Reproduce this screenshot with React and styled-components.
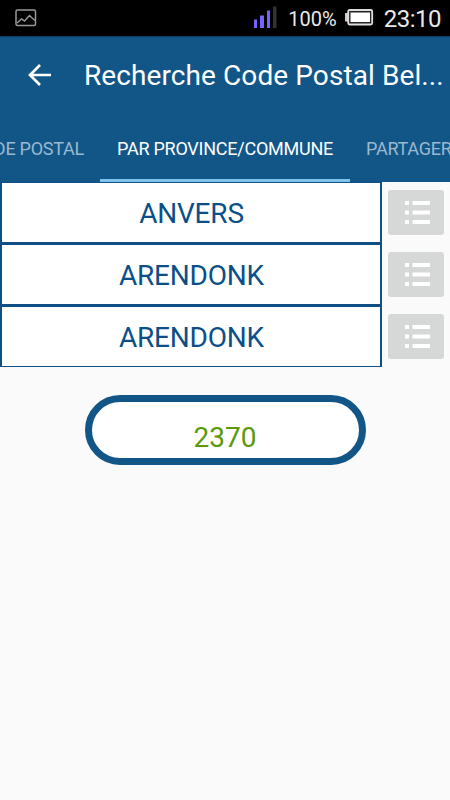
import React from 'react'
import styled, { createGlobalStyle } from 'styled-components';

const rows = ['ANVERS', 'ARENDONK', 'ARENDONK'];

export default function App() {
  return (
    <Screen>
      <GlobalStyle />
      <StatusBar>
        <PictureIcon />
        <StatusRight>
          <SignalIcon />
          <Percent>100%</Percent>
          <BatteryIcon />
          <Clock>23:10</Clock>
        </StatusRight>
      </StatusBar>
      <AppBar>
        <BackButton aria-label="Retour">
          <svg width="24" height="24" viewBox="0 0 24 24" fill="none" stroke="#fff" strokeWidth="2.7">
            <path d="M24 12H4M13 2L3 12l10 10" />
          </svg>
        </BackButton>
        <Title>Recherche Code Postal Bel...</Title>
      </AppBar>
      <Tabs>
        <Tab $align="flex-end">CODE POSTAL</Tab>
        <Tab $active>PAR PROVINCE/COMMUNE</Tab>
        <Tab $align="flex-start">PARTAGER</Tab>
      </Tabs>
      <main>
        {rows.map((label, i) => (
          <Row key={i}>
            <Field $last={i === rows.length - 1}>{label}</Field>
            <ListButton aria-label="Liste">
              <svg width="25" height="23" viewBox="0 0 25 23" fill="#fff">
                <path d="M0 0h4v4H0zM7.500 0h17.500v4H7.500zM0 9.500h4v4H0zM7.500 9.500h17.500v4H7.500zM0 19h4v4H0zM7.500 19h17.500v4H7.500z" />
              </svg>
            </ListButton>
          </Row>
        ))}
        <Result>2370</Result>
      </main>
    </Screen>
  )
}

const PictureIcon = () => (
  <svg width="22" height="18" viewBox="0 0 22 18" fill="none" stroke="#999" strokeWidth="1.5">
    <rect x="1" y="1" width="19.500" height="15.500" rx="1.500" />
    <path d="M2 14l4.500-4 3 2 5-5.500 2 2 3.500 3" />
  </svg>
)

const SignalIcon = () => (
  <svg width="24" height="24" viewBox="0 0 24 24" fill="#7464fb">
    <path d="M1 13.500h3V22H1zM7 9.500h4V22H7zM14 4.500h3V22h-3z" />
    <path d="M20 0.500h3.500V22H20z" fill="#333" />
  </svg>
)

const BatteryIcon = () => (
  <svg width="30" height="18" viewBox="0 0 30 18">
    <path d="M0 4h3v8.500H0z" fill="#ccc" />
    <rect x="3.200" y="1" width="24" height="14.500" rx="1.500" fill="#222" stroke="#ddd" strokeWidth="1.800" />
    <rect x="5.500" y="3.500" width="19.500" height="9.500" fill="#fff" />
  </svg>
)

const GlobalStyle = createGlobalStyle`
  * { box-sizing: border-box; }
  body {
    margin: 0;
    background: #fafafa;
    overflow: hidden;
    font-family: Roboto, sans-serif;
  }
`

const Screen = styled.div`
  width: 450px;
  height: 800px;
  overflow: hidden;
  background: #fafafa;
`

const StatusBar = styled.div`
  display: flex;
  align-items: center;
  justify-content: space-between;
  height: 36px;
  padding: 0 9px 0 15px;
  background: #000;
  color: #e9e9e9;
`

const StatusRight = styled.div`
  display: flex;
  align-items: center;
`

const Percent = styled.div`
  margin: 2px 8px 0 11px;
  font-size: 20px;
  line-height: 24px;
`

const Clock = styled.div`
  margin: 1px 0 0 9px;
  font-size: 24px;
  letter-spacing: -0.500px;
  line-height: 28px;
`

const AppBar = styled.header`
  display: flex;
  align-items: center;
  height: 79px;
  padding-left: 27px;
  background: #125688;
  box-shadow: inset 0 2px 1px -1px #0b3d62;
  color: #fff;
`

const BackButton = styled.button`
  display: flex;
  margin-top: -1px;
  padding: 0;
  border: 0;
  background: none;
`

const Title = styled.h1`
  margin: 0 0 0 33px;
  font-size: 28px;
  font-weight: 400;
  letter-spacing: 0.090px;
  line-height: 34px;
  white-space: nowrap;
`

const Tabs = styled.nav`
  display: grid;
  grid-template-columns: 100px 250px 100px;
  height: 67px;
  overflow: hidden;
  background: #125688;
`

const Tab = styled.div`
  display: flex;
  justify-content: ${props => props.$align || 'center'};
  height: 67px;
  padding: 0 16px;
  border-bottom: 3px solid ${props => props.$active ? '#7cc4ec' : 'transparent'};
  color: ${props => props.$active ? '#fff' : '#9cb8cf'};
  font-size: 18px;
  letter-spacing: -0.250px;
  line-height: 68px;
  white-space: nowrap;
`

const Row = styled.div`
  display: flex;
  height: 62px;
`

const Field = styled.div`
  width: 382px;
  height: ${props => props.$last ? '61px' : '62px'};
  padding-left: 1px;
  border: 2px solid #0f4f85;
  border-top-width: 1px;
  border-bottom-width: ${props => props.$last ? '1px' : '2px'};
  background: #fff;
  color: #0b4f88;
  font-size: 28px;
  letter-spacing: -0.200px;
  line-height: 62px;
  text-align: center;
`

const ListButton = styled.button`
  display: flex;
  align-items: center;
  justify-content: center;
  width: 56px;
  height: 45px;
  margin: 8px 0 0 6px;
  padding: 0 0 0 3px;
  border: 0;
  border-radius: 3px;
  background: #d6d8d7;
`

const Result = styled.div`
  width: 281px;
  height: 70px;
  margin: 27px auto 0;
  border: 7px solid #125688;
  border-radius: 35px;
  background: #fff;
  color: #5a9a0a;
  font-size: 28px;
  line-height: 72px;
  text-align: center;
`
